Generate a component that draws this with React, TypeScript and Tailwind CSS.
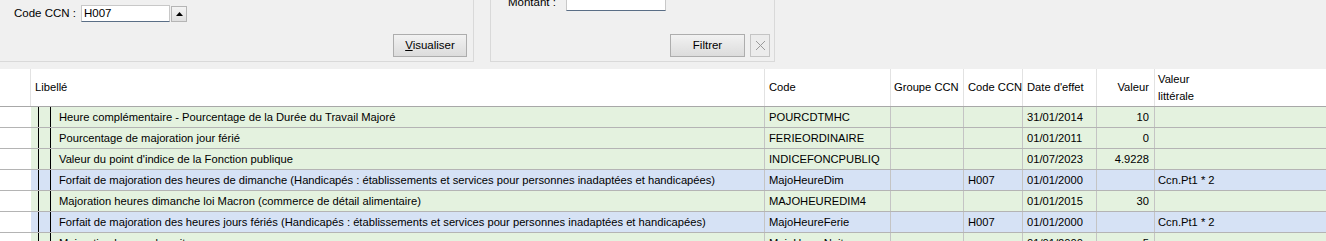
import React from 'react';

type Row = {
	libelle: string;
	code: string;
	groupe: string;
	ccn: string;
	date: string;
	valeur: string;
	litterale: string;
	tone: 'green' | 'blue';
};

const rows: Row[] = [
	{ libelle: 'Heure complémentaire - Pourcentage de la Durée du Travail Majoré', code: 'POURCDTMHC', groupe: '', ccn: '', date: '31/01/2014', valeur: '10', litterale: '', tone: 'green' },
	{ libelle: 'Pourcentage de majoration jour férié', code: 'FERIEORDINAIRE', groupe: '', ccn: '', date: '01/01/2011', valeur: '0', litterale: '', tone: 'green' },
	{ libelle: "Valeur du point d'indice de la Fonction publique", code: 'INDICEFONCPUBLIQ', groupe: '', ccn: '', date: '01/07/2023', valeur: '4.9228', litterale: '', tone: 'green' },
	{ libelle: 'Forfait de majoration des heures de dimanche (Handicapés : établissements et services pour personnes inadaptées et handicapées)', code: 'MajoHeureDim', groupe: '', ccn: 'H007', date: '01/01/2000', valeur: '', litterale: 'Ccn.Pt1 * 2', tone: 'blue' },
	{ libelle: 'Majoration heures dimanche loi Macron (commerce de détail alimentaire)', code: 'MAJOHEUREDIM4', groupe: '', ccn: '', date: '01/01/2015', valeur: '30', litterale: '', tone: 'green' },
	{ libelle: 'Forfait de majoration des heures jours fériés (Handicapés : établissements et services pour personnes inadaptées et handicapées)', code: 'MajoHeureFerie', groupe: '', ccn: 'H007', date: '01/01/2000', valeur: '', litterale: 'Ccn.Pt1 * 2', tone: 'blue' },
	{ libelle: 'Majoration heures de nuit', code: 'MajoHeureNuit', groupe: '', ccn: '', date: '01/01/2000', valeur: '5', litterale: '', tone: 'green' },
];

const cols = 'grid grid-cols-[31px_734px_126px_73px_59px_74px_58px_1fr]';

function WinButton({ children, className = '' }: { children: React.ReactNode; className?: string }) {
	return (
		<div
			className={`flex items-center justify-center h-[23px] border border-[#adadad] bg-gradient-to-b from-[#f2f2f2] to-[#dcdcdc] text-[11.5px] text-black ${className}`}
		>
			{children}
		</div>
	);
}

export default function App() {
	return (
		<div className="w-[1326px] h-[241px] overflow-hidden bg-white font-['Liberation_Sans',Arial,sans-serif]">
			{/* filter panel */}
			<div className="h-[69px] bg-[#f0f0f0] flex items-start">
				<div className="w-[474px] h-[62px] border-r border-b border-[#d9d9d9] flex flex-col">
					<div className="flex items-center mt-[5px]">
						<span className="ml-[14px] w-[67px] text-[11.5px] text-black">Code CCN :</span>
						<div className="w-[89px] h-[17px] bg-white border border-[#c8c8c8] border-b-[#5a6e86] flex items-center pl-[2px] text-[11.5px] text-black">
							H007
						</div>
						<div className="ml-[1px] w-[16px] h-[16px] border border-[#b5b5b5] bg-gradient-to-b from-[#f4f4f4] to-[#e0e0e0] flex items-center justify-center">
							<svg width="7" height="4" viewBox="0 0 7 4">
								<path d="M0 4 L3.5 0 L7 4 Z" fill="#000" />
							</svg>
						</div>
					</div>
					<div className="flex justify-end mt-[12px] pr-[6px]">
						<WinButton className="w-[74px]">
							<span>
								<span className="underline">V</span>isualiser
							</span>
						</WinButton>
					</div>
				</div>

				<div className="ml-[16px] w-[285px] h-[62px] border-l border-r border-b border-[#d9d9d9] flex flex-col">
					<div className="flex items-center -mt-[6px]">
						<span className="ml-[17px] w-[58px] text-[11.5px] text-black">Montant :</span>
						<div className="w-[100px] h-[17px] -mt-[1px] bg-white border border-[#c8c8c8] border-b-[#5a6e86]" />
					</div>
					<div className="flex justify-end mt-[23px] pr-[4px] gap-[5px]">
						<WinButton className="w-[75px]">Filtrer</WinButton>
						<div className="w-[20px] h-[23px] border border-[#c4c4c4] bg-[#ececec] flex items-center justify-center">
							<svg width="11" height="11" viewBox="0 0 11 11">
								<path d="M1 1 L10 10 M10 1 L1 10" stroke="#9a9a9a" strokeWidth="1" />
							</svg>
						</div>
					</div>
				</div>
			</div>

			{/* grid header */}
			<div className={`${cols} h-[38px] bg-white border-b border-[#a8a8a8] text-[11.2px] text-black whitespace-nowrap`}>
				<div className="border-r border-[#e2e2e2]" />
				<div className="flex items-center pl-[4px] border-r border-[#e2e2e2]">Libellé</div>
				<div className="flex items-center pl-[4px] border-r border-[#e2e2e2]">Code</div>
				<div className="flex items-center pl-[3px] border-r border-[#e2e2e2]">Groupe CCN</div>
				<div className="flex items-center pl-[4px] border-r border-[#e2e2e2]">Code CCN</div>
				<div className="flex items-center pl-[4px] border-r border-[#e2e2e2]">Date d'effet</div>
				<div className="flex items-center justify-end pr-[5px] border-r border-[#e2e2e2]">Valeur</div>
				<div className="pl-[3px] pt-[2px] leading-[17px]">
					Valeur
					<br />
					littérale
				</div>
			</div>

			{/* grid rows */}
			{rows.map((row, i) => {
				const bg = row.tone === 'green' ? 'bg-[#e4f2df]' : 'bg-[#d6e2f5]';
				return (
					<div key={i} className={`${cols} h-[21px] border-b border-[#b4b4b4] text-[11.2px] text-black whitespace-nowrap`}>
						<div className="bg-white" />
						<div className={`flex items-center border-r border-[#c4c4c4] ${bg}`}>
							<div className="ml-[7px] w-px h-full bg-black" />
							<div className="ml-[11px] w-px h-full bg-black" />
							<span className="ml-[8px]">{row.libelle}</span>
						</div>
						{[row.code, row.groupe, row.ccn, row.date].map((v, j) => (
							<div key={j} className={`flex items-center pl-[4px] border-r border-[#c4c4c4] ${bg}`}>
								{v}
							</div>
						))}
						<div className={`flex items-center justify-end pr-[5px] border-r border-[#c4c4c4] ${bg}`}>{row.valeur}</div>
						<div className={`flex items-center pl-[3px] ${bg}`}>{row.litterale}</div>
					</div>
				);
			})}
		</div>
	);
}
